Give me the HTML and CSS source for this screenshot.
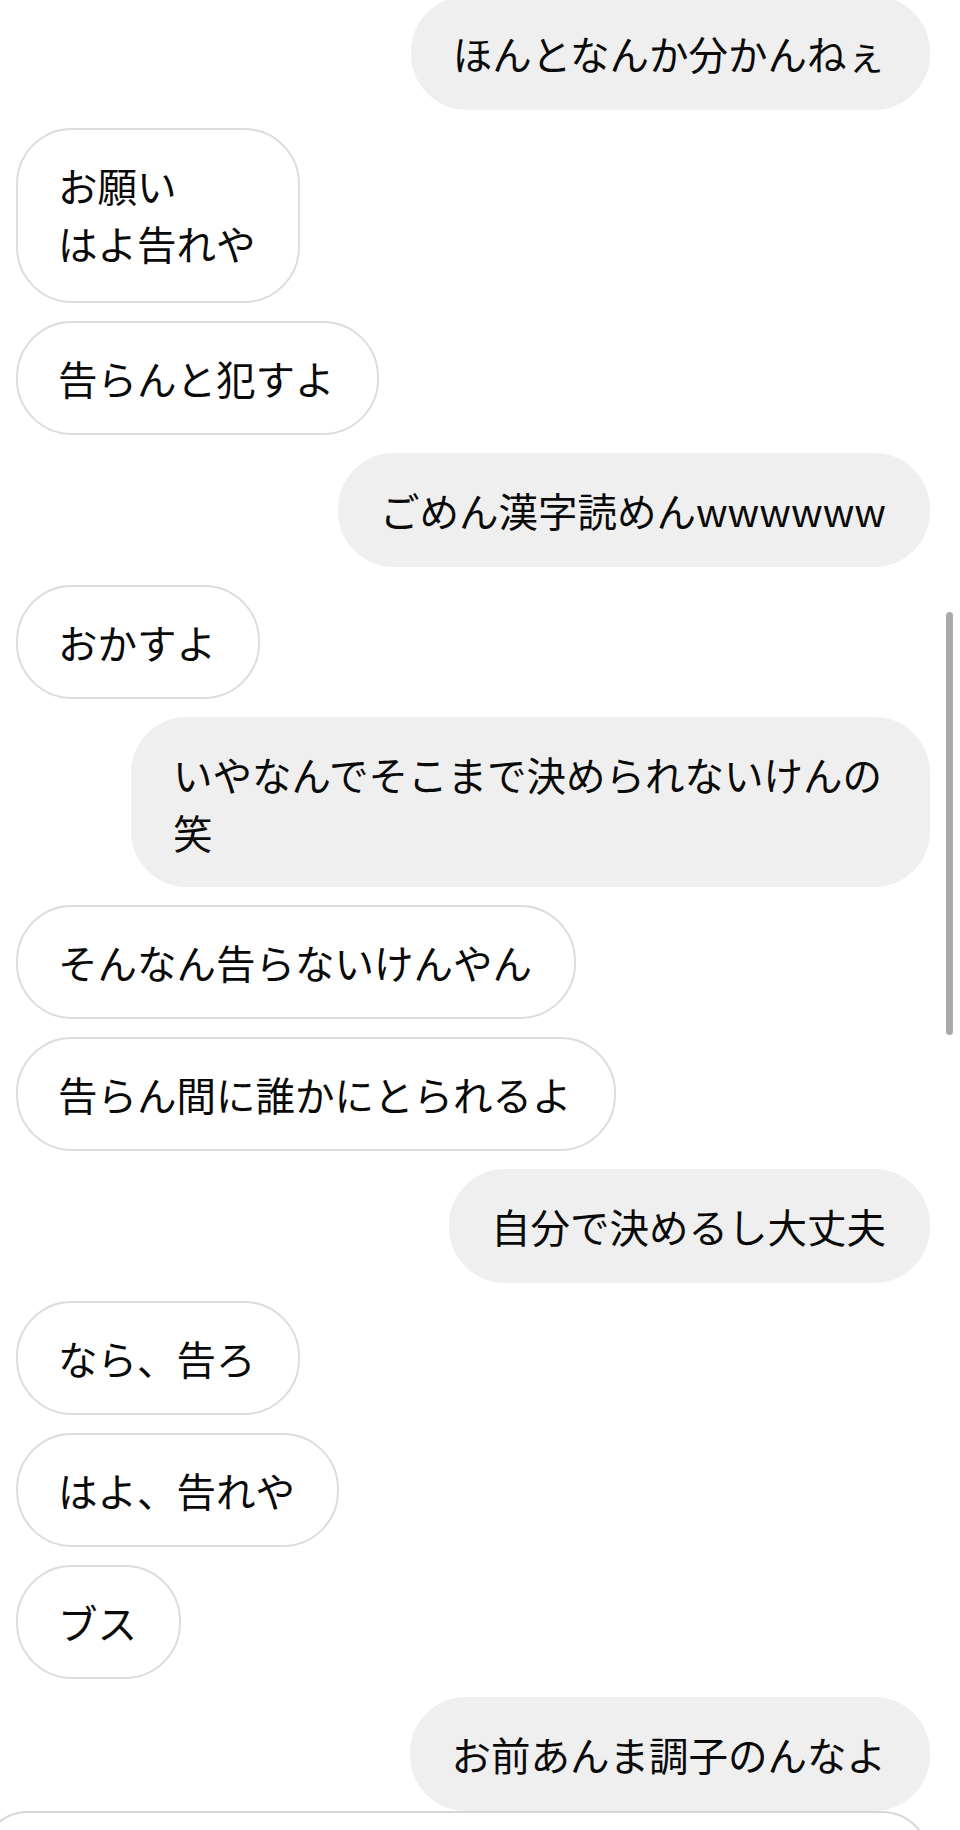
FILE: index.html
```html
<!DOCTYPE html>
<html lang="ja">
<head>
<meta charset="utf-8">
<title>Chat</title>
<link rel="stylesheet" href="styles.css">
</head>
<body>
<div class="screen">
  <div class="thread">
    <div class="msg sent">ほんとなんか分かんねぇ</div>
    <div class="msg recv multi">お願い<br>はよ告れや</div>
    <div class="msg recv">告らんと犯すよ</div>
    <div class="msg sent">ごめん漢字読めんwwwwww</div>
    <div class="msg recv">おかすよ</div>
    <div class="msg sent wrapped">いやなんでそこまで決められないけんの笑</div>
    <div class="msg recv">そんなん告らないけんやん</div>
    <div class="msg recv">告らん間に誰かにとられるよ</div>
    <div class="msg sent">自分で決めるし大丈夫</div>
    <div class="msg recv">なら、告ろ</div>
    <div class="msg recv">はよ、告れや</div>
    <div class="msg recv">ブス</div>
    <div class="msg sent">お前あんま調子のんなよ</div>
  </div>
  <div class="composer"></div>
  <div class="scrollbar"></div>
</div>
</body>
</html>
```
FILE: styles.css
```css
html, body {
  margin: 0;
  padding: 0;
  background: #ffffff;
  overflow: hidden;
}

.screen {
  position: relative;
  width: 960px;
  height: 1830px;
  overflow: hidden;
  font-family: "Noto Sans CJK JP", "Noto Sans", sans-serif;
  color: #0a0a0a;
}

.thread {
  display: flex;
  flex-direction: column;
  gap: 18px;
  margin-top: -4px;
  padding: 0 30px 0 16px;
}

.msg {
  max-width: calc(18em + 88px);
  box-sizing: border-box;
  font-size: 39.5px;
  line-height: 58px;
  padding: 26px 42px 26px 40px;
  border: 2px solid transparent;
  border-radius: 56px;
  word-break: break-all;
}

.multi {
  padding-bottom: 29px;
}

.wrapped {
  padding-bottom: 24px;
}

.recv {
  align-self: flex-start;
  background: #ffffff;
  border-color: #dcdcdc;
}

.sent {
  align-self: flex-end;
  background: #efefef;
  border-color: #efefef;
}

.composer {
  position: absolute;
  top: 1811px;
  left: -20px;
  width: 950px;
  height: 110px;
  box-sizing: border-box;
  border: 2px solid #d6d6d6;
  border-radius: 48px;
  background: #ffffff;
}

.scrollbar {
  position: absolute;
  left: 946px;
  top: 612px;
  width: 7px;
  height: 423px;
  border-radius: 4px;
  background: #a9a9a9;
}
```
